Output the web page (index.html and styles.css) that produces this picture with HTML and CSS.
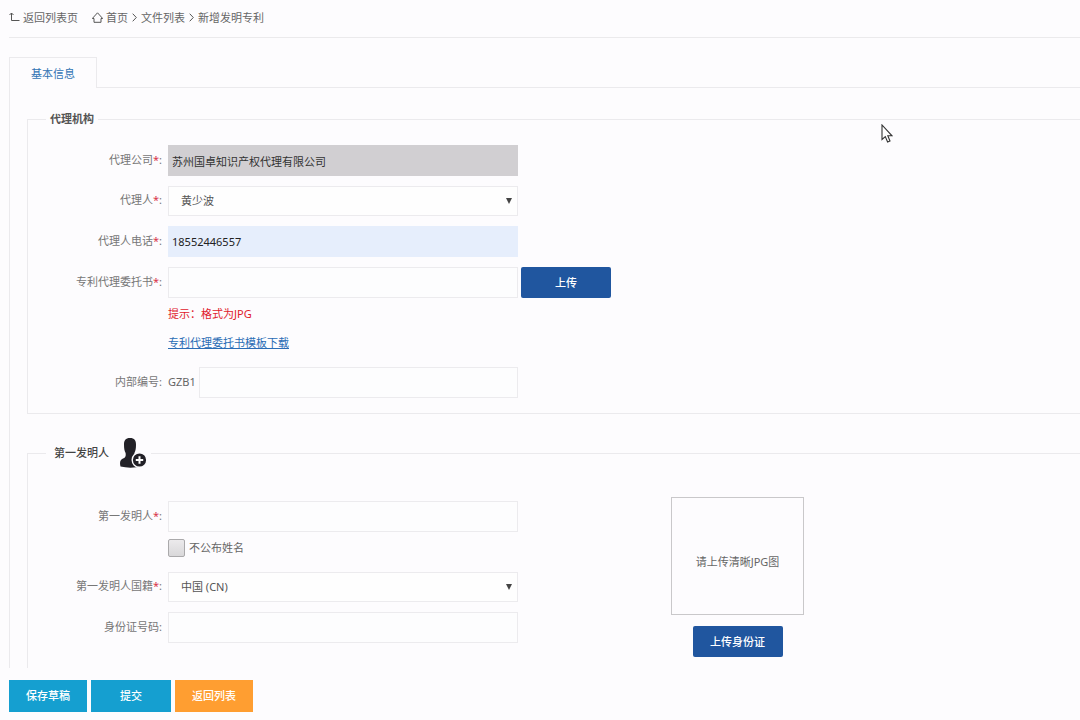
FILE: index.html
```html
<!DOCTYPE html>
<html lang="zh-CN">
<head>
<meta charset="utf-8">
<meta name="viewport" content="width=device-width, initial-scale=1">
<title>新增发明专利</title>
<link rel="stylesheet" href="styles.css">
</head>
<body>
<header class="crumbs">
  <a class="back" href="#"><svg class="icon" width="11" height="11" viewBox="0 0 11 11"><path d="M0.5 3 L2.5 1 L4.5 3 M2.5 1 V8.5 H10.5"/></svg>返回列表页</a>
  <nav class="trail" aria-label="路径">
    <a href="#"><svg class="icon home" width="11" height="11" viewBox="0 0 11 11"><path d="M0.3 6.5 L5.5 0.8 L10.7 6.5 H9 V10.3 H2 V6.5Z"/></svg>首页</a>
    <svg class="icon sep" width="5" height="9" viewBox="0 0 5 9"><path d="M0.7 0.7 L4.3 4.5 L0.7 8.3"/></svg>
    <a href="#">文件列表</a>
    <svg class="icon sep" width="5" height="9" viewBox="0 0 5 9"><path d="M0.7 0.7 L4.3 4.5 L0.7 8.3"/></svg>
    <span>新增发明专利</span>
  </nav>
</header>

<main class="content">
  <div class="tabs"><button class="tab" type="button">基本信息</button></div>
  <form class="panel" id="patent">
    <fieldset class="group agency">
      <legend>代理机构</legend>
      <div class="row">
        <label class="label" for="company">代理公司<i>*</i>:</label>
        <input class="field readonly" id="company" type="text" value="苏州国卓知识产权代理有限公司" readonly>
      </div>
      <div class="row">
        <label class="label" for="agent">代理人<i>*</i>:</label>
        <span class="select"><select id="agent"><option>黄少波</option></select></span>
      </div>
      <div class="row">
        <label class="label" for="phone">代理人电话<i>*</i>:</label>
        <input class="field filled" id="phone" type="text" value="18552446557">
      </div>
      <div class="row">
        <label class="label" for="proxy">专利代理委托书<i>*</i>:</label>
        <input class="field" id="proxy" type="text">
        <button class="upload" type="button">上传</button>
      </div>
      <div class="notes">
        <p class="hint">提示：格式为JPG</p>
        <p><a class="download" href="#">专利代理委托书模板下载</a></p>
      </div>
      <div class="row">
        <label class="label" for="number">内部编号:</label>
        <span class="prefixed"><span class="prefix">GZB1</span><input class="field" id="number" type="text"></span>
      </div>
    </fieldset>

    <fieldset class="group inventor">
      <legend>第一发明人
        <button class="add" type="button" aria-label="添加发明人"><svg width="28" height="30" viewBox="0 0 28 30"><path fill="#222127" d="M11 0 C15.5 0 17 2.5 17 6.5 C17 10.5 16.6 12.5 15.6 14.5 C15 17 15.2 18.2 17 19 C22 21 24 22.5 24 28 Q12 31 1.5 28.5 C0.3 24 1.5 21.8 4 20.6 C6.6 19.4 7 18 6.6 15 C5.4 12.8 5 10.5 5 6.5 C5 2.5 6.5 0 11 0Z"/><circle cx="20.5" cy="22" r="7.3" fill="#222127" stroke="#fdfcfe" stroke-width="1.4"/><path d="M16.8 22 H24.2 M20.5 18.3 V25.7" stroke="#fff" stroke-width="2"/></svg></button>
      </legend>
      <div class="columns">
        <div class="fields">
          <div class="row">
            <label class="label" for="name">第一发明人<i>*</i>:</label>
            <input class="field" id="name" type="text">
          </div>
          <div class="tick"><input id="hide" type="checkbox"><label for="hide">不公布姓名</label></div>
          <div class="row">
            <label class="label" for="country">第一发明人国籍<i>*</i>:</label>
            <span class="select"><select id="country"><option>中国 (CN)</option></select></span>
          </div>
          <div class="row">
            <label class="label" for="idcard">身份证号码:</label>
            <input class="field" id="idcard" type="text">
          </div>
        </div>
        <div class="photo">
          <div class="preview">请上传清晰JPG图</div>
          <button class="upload" type="button">上传身份证</button>
        </div>
      </div>
    </fieldset>
  </form>
</main>

<footer class="actions">
  <button class="action" type="submit" form="patent">保存草稿</button>
  <button class="action submit" type="submit" form="patent">提交</button>
  <button class="action return" type="button">返回列表</button>
</footer>

<svg class="pointer" width="12" height="20" viewBox="0 0 12 20" aria-hidden="true"><path d="M1 1 V15.5 L4.3 12.6 L6.6 18 L9 17 L6.8 11.8 H11Z" fill="#fff" stroke="#333" stroke-width="1.1"/></svg>
</body>
</html>
```
FILE: styles.css
```css
* { box-sizing: border-box; }

body {
  margin: 0;
  height: 100vh;
  display: flex;
  flex-direction: column;
  overflow: hidden;
  background: #fdfcfe;
  color: #666;
  font: 11px/20px "Noto Sans", "Noto Sans CJK SC", sans-serif;
}

button, input, select { font: inherit; color: inherit; }
button { cursor: pointer; border: 0; padding: 0; }
a { color: inherit; text-decoration: none; }
p { margin: 0; }

.icon { fill: none; stroke: #555; stroke-width: 1; }

.crumbs {
  display: flex;
  gap: 14px;
  align-items: center;
  height: 38px;
  flex: none;
  margin-left: 9px;
  padding-bottom: 2px;
  border-bottom: 1px solid #ebeaec;
}
.crumbs a { display: flex; align-items: center; gap: 3px; }
.trail { display: flex; align-items: center; gap: 4px; }

.content {
  flex: 1;
  min-height: 0;
  overflow: hidden;
  padding: 19px 0 0 9px;
}

.tabs { display: flex; }
.tabs::after { content: ""; flex: 1; border-bottom: 1px solid #ebeaed; }
.tab {
  height: 31px;
  padding: 1px 21px 0;
  background: none;
  border: 1px solid #ebeaed;
  border-bottom: 0;
  color: #3173b4;
}

.panel { border-left: 1px solid #ebeaed; padding: 21px 0 0 17px; }

.group {
  margin: 0;
  min-width: 0;
  padding: 16px 0 15px;
  border: 1px solid #ebeaed;
  border-right: 0;
}
.group legend {
  margin-left: 18px;
  padding: 0 4px;
  color: #444;
  font-weight: 500;
}
.agency legend { font-weight: 700; color: #555; }
.inventor { margin-top: 24px; padding: 29px 0 40px; }
.inventor legend {
  display: flex;
  align-items: center;
  gap: 10px;
  height: 30px;
  padding-left: 8px;
}
.add { background: none; height: 30px; }
.add svg { display: block; }

.row { display: flex; align-items: center; }
.row + .row, .notes + .row, .tick + .row { margin-top: 10px; }
.label, .prefix { padding-bottom: 2px; }
.label { width: 134px; margin-right: 6px; text-align: right; color: #777; }
.label i { color: #d8354a; font-style: normal; }

.field {
  width: 350px;
  height: 31px;
  padding: 0 3px;
  border: 1px solid #ecebee;
  background: #fdfdfe;
  color: #222;
}
.readonly { background: #d1cfd2; border-color: #d1cfd2; color: #333; }
.filled { background: #e6eefc; border-color: #e6eefc; }

.select { position: relative; width: 350px; }
.select select {
  display: block;
  width: 100%;
  height: 30px;
  padding: 0 12px;
  appearance: none;
  border: 1px solid #ecebee;
  border-radius: 0;
  background: #fefefe;
  color: #555;
}
.select::after {
  content: "";
  position: absolute;
  right: 6px;
  top: 12px;
  border: 3px solid transparent;
  border-top: 6px solid #444;
  border-bottom: 0;
  pointer-events: none;
}

.upload {
  width: 90px;
  height: 31px;
  border-radius: 2px;
  background: #20569f;
  color: #fff;
  font-weight: 500;
}
.row .upload { margin-left: 3px; }

.notes { margin: 1px 0 0 140px; line-height: 29px; }
.hint { color: #e0202c; }
.download { color: #2a6cb5; text-decoration: underline; }

.prefixed { display: flex; align-items: center; gap: 3px; width: 350px; }
.prefixed .field { flex: 1; min-width: 0; }

.columns { display: flex; gap: 153px; }
.fields { padding-top: 4px; }
.tick {
  display: flex;
  align-items: center;
  gap: 4px;
  height: 30px;
  margin-left: 140px;
  padding-top: 2px;
}
.tick input {
  width: 17px;
  height: 18px;
  margin: 0;
  appearance: none;
  border: 1px solid #aaa9ab;
  border-radius: 2px;
  background: linear-gradient(#eceaec, #d9d8da);
}

.photo { display: flex; flex-direction: column; align-items: center; gap: 11px; }
.preview {
  display: grid;
  place-items: center;
  width: 133px;
  height: 118px;
  padding-top: 11px;
  border: 1px solid #c9c8ca;
}

.actions { display: flex; gap: 4px; height: 52px; flex: none; padding: 12px 9px 8px; }
.action {
  height: 32px;
  padding: 0 17px;
  background: #159fd0;
  color: #fff;
  font-weight: 500;
}
.submit { padding: 0 29px; }
.return { background: #ff9e31; }

.pointer { position: absolute; left: 881px; top: 124px; }
```
